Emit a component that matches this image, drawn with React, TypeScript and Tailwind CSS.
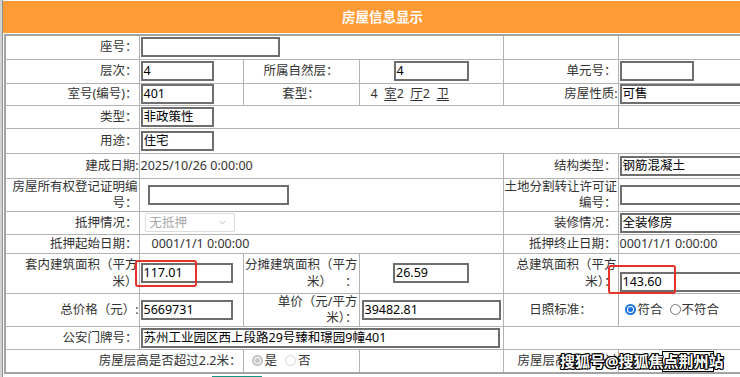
import React from 'react';
import { ChevronDown } from 'lucide-react';

const td = 'border border-[#b3b3b3] px-[1px] py-0';

function Box({ children, className = '' }: { children?: React.ReactNode; className?: string }) {
  return (
    <div
      className={`h-[20px] border-2 border-[#6e6e6e] bg-white pl-[1px] text-[12.5px] leading-[16px] text-black whitespace-nowrap overflow-hidden ${className}`}
    >
      {children}
    </div>
  );
}

function Radio({ checked = false, disabled = false, className = '' }: { checked?: boolean; disabled?: boolean; className?: string }) {
  if (disabled) {
    return checked ? (
      <span className={`w-[11px] h-[11px] rounded-full border-2 border-[#c4c4c4] bg-white flex items-center justify-center ${className}`}>
        <span className="w-[5px] h-[5px] rounded-full bg-[#c4c4c4]" />
      </span>
    ) : (
      <span className={`w-[11px] h-[11px] rounded-full border border-[#d6d6d6] bg-white ${className}`} />
    );
  }
  return checked ? (
    <span className={`w-[11px] h-[11px] rounded-full border-2 border-[#1b74e4] bg-white flex items-center justify-center ${className}`}>
      <span className="w-[5px] h-[5px] rounded-full bg-[#1b74e4]" />
    </span>
  ) : (
    <span className={`w-[11px] h-[11px] rounded-full border border-[#767676] bg-white ${className}`} />
  );
}

export default function App() {
  return (
    <div className="relative w-[760px] h-[377px] overflow-hidden bg-white flex font-['Noto_Sans','Noto_Sans_CJK_SC',sans-serif] text-[12.5px] text-[#333]">
      <div className="w-[3px] h-full flex shrink-0">
        <div className="w-[2px] h-full bg-[#d2d2d2]" />
        <div className="w-[1px] h-full bg-[#8e8e8e]" />
      </div>
      <div className="flex-1 flex flex-col">
        <div className="shrink-0 mt-[1px] h-[32px] bg-[#ff9b35] flex items-center justify-center text-white font-bold text-[13.5px]">
          房屋信息显示
        </div>
        <table className="shrink-0 ml-[1px] mt-[1px] w-[756px] table-fixed border-collapse border-2 border-[#a3a3a3] leading-[16px]">
          <colgroup>
            <col className="w-[134px]" />
            <col className="w-[104px]" />
            <col className="w-[116px]" />
            <col className="w-[144px]" />
            <col className="w-[115px]" />
            <col className="w-[143px]" />
          </colgroup>
          <tbody className="align-middle">
            <tr className="h-[24px]">
              <td className={`${td} text-right`}>座号：</td>
              <td className={td} colSpan={3}>
                <Box className="w-[139px]" />
              </td>
              <td className={td}></td>
              <td className={td}></td>
            </tr>
            <tr className="h-[24px]">
              <td className={`${td} text-right`}>层次：</td>
              <td className={td}>
                <Box className="w-[73px]">4</Box>
              </td>
              <td className={`${td} text-center`}>所属自然层：</td>
              <td className={td}>
                <Box className="w-[75px] mx-auto">4</Box>
              </td>
              <td className={`${td} text-right`}>单元号：</td>
              <td className={td}>
                <Box className="w-[74px]" />
              </td>
            </tr>
            <tr className="h-[22px]">
              <td className={`${td} text-right`}>室号(编号)：</td>
              <td className={td}>
                <Box className="w-[73px]">401</Box>
              </td>
              <td className={`${td} text-center`}>套型：</td>
              <td className={`${td} pl-[11px]`}>
                4&nbsp; <span className="underline underline-offset-[2px]">室</span>2&nbsp; <span className="underline underline-offset-[2px]">厅</span>2&nbsp;{' '}
                <span className="underline underline-offset-[2px]">卫</span>
              </td>
              <td className={`${td} text-right pr-0`}>房屋性质:</td>
              <td className={td}>
                <Box className="w-[140px]">可售</Box>
              </td>
            </tr>
            <tr className="h-[23px]">
              <td className={`${td} text-right`}>类型：</td>
              <td className={td} colSpan={4}>
                <Box className="w-[73px]">非政策性</Box>
              </td>
              <td className={td}></td>
            </tr>
            <tr className="h-[25px]">
              <td className={`${td} text-right`}>用途：</td>
              <td className={td} colSpan={5}>
                <Box className="w-[73px]">住宅</Box>
              </td>
            </tr>
            <tr className="h-[25px]">
              <td className={`${td} text-right pr-0`}>建成日期:</td>
              <td className={td} colSpan={3}>
                2025/10/26 0:00:00
              </td>
              <td className={`${td} text-right`}>结构类型：</td>
              <td className={td}>
                <Box className="w-[140px]">钢筋混凝土</Box>
              </td>
            </tr>
            <tr className="h-[32px]">
              <td className={`${td} text-right whitespace-nowrap`}>
                房屋所有权登记证明编
                <br />
                号：
              </td>
              <td className={td} colSpan={3}>
                <Box className="w-[141px] ml-[7px]" />
              </td>
              <td className={`${td} text-right whitespace-nowrap`}>
                土地分割转让许可证
                <br />
                编号：
              </td>
              <td className={td}>
                <Box className="w-[140px]" />
              </td>
            </tr>
            <tr className="h-[23px]">
              <td className={`${td} text-right`}>抵押情况：</td>
              <td className={td} colSpan={3}>
                <div className="ml-[4px] w-[90px] h-[19px] border border-[#dcdcdc] rounded-[2px] flex items-center justify-between pl-[4px] pr-[6px] text-[#a8a8a8]">
                  <span>无抵押</span>
                  <ChevronDown size={11} strokeWidth={1.5} className="text-[#9a9a9a]" />
                </div>
              </td>
              <td className={`${td} text-right`}>装修情况：</td>
              <td className={td}>
                <Box className="w-[140px]">全装修房</Box>
              </td>
            </tr>
            <tr className="h-[19px]">
              <td className={`${td} text-right`}>抵押起始日期：</td>
              <td className={`${td} pl-[12px]`} colSpan={3}>
                0001/1/1 0:00:00
              </td>
              <td className={`${td} text-right`}>抵押终止日期：</td>
              <td className={td}>0001/1/1 0:00:00</td>
            </tr>
            <tr className="h-[40px]">
              <td className={`${td} text-right whitespace-nowrap leading-[17px]`}>
                套内建筑面积（平方
                <br />
                米）
              </td>
              <td className={td}>
                <Box className="w-[92px]">117.01</Box>
              </td>
              <td className={`${td} text-right whitespace-nowrap leading-[17px]`}>
                分摊建筑面积（平方
                <br />
                米）&nbsp;&nbsp;&nbsp;&nbsp;：
              </td>
              <td className={td}>
                <Box className="w-[76px] mx-auto">26.59</Box>
              </td>
              <td className={`${td} text-right whitespace-nowrap leading-[17px]`}>
                总建筑面积（平方
                <br />
                米）：
              </td>
              <td className={`${td} align-bottom pb-[1px]`}>
                <Box className="w-[140px]">143.60</Box>
              </td>
            </tr>
            <tr className="h-[33px]">
              <td className={`${td} text-right pr-0`}>总价格（元）:</td>
              <td className={td}>
                <Box className="w-[92px]">5669731</Box>
              </td>
              <td className={`${td} text-right whitespace-nowrap`}>
                单价（元/平方
                <br />
                米）：
              </td>
              <td className={td}>
                <Box className="w-[139px] ml-[1px]">39482.81</Box>
              </td>
              <td className={`${td} text-center`}>日照标准：</td>
              <td className={td}>
                <div className="flex items-center pl-[5px]">
                  <Radio checked />
                  <span className="ml-[2px]">符合</span>
                  <Radio className="ml-[7px]" />
                  <span className="ml-[1px]">不符合</span>
                </div>
              </td>
            </tr>
            <tr className="h-[23px]">
              <td className={`${td} text-right`}>公安门牌号：</td>
              <td className={td} colSpan={3}>
                <Box className="w-[359px]">苏州工业园区西上段路29号臻和璟园9幢401</Box>
              </td>
              <td className={td} colSpan={2}></td>
            </tr>
            <tr className="h-[24px]">
              <td className={`${td} text-right`} colSpan={2}>
                房屋层高是否超过2.2米：
              </td>
              <td className={td}>
                <div className="flex items-center pl-[7px]">
                  <Radio checked disabled />
                  <span className="ml-[2px]">是</span>
                  <Radio disabled className="ml-[8px]" />
                  <span className="ml-[2px]">否</span>
                </div>
              </td>
              <td className={td}></td>
              <td className={`${td} pl-[14px] whitespace-nowrap overflow-hidden`}>房屋层高是否超过2.2米：</td>
              <td className={td}></td>
            </tr>
          </tbody>
        </table>
        <div className="shrink-0 mt-[2px] ml-[209px] w-[50px] h-[4px] bg-[#139682]" />
      </div>

      <div className="absolute left-[135px] top-[260px] w-[62px] h-[27px] border-2 border-[#e6332a] rounded-[3px]" />
      <div className="absolute left-[608px] top-[265px] w-[68px] h-[29px] border-2 border-[#e6332a] rounded-[3px]" />

      <div className="absolute left-[662px] top-[351px] w-[52px] h-[21px] border-[1.5px] border-black bg-white" />
      <div className="absolute left-[560px] top-[351px] h-[21px] flex items-center text-[15px] font-bold text-white whitespace-nowrap [text-shadow:1px_0_0_#000,-1px_0_0_#000,0_1px_0_#000,0_-1px_0_#000,1px_1px_0_#000,-1px_-1px_0_#000,1px_-1px_0_#000,-1px_1px_0_#000]">
        搜狐号@搜狐焦点荆州站
      </div>
    </div>
  );
}
